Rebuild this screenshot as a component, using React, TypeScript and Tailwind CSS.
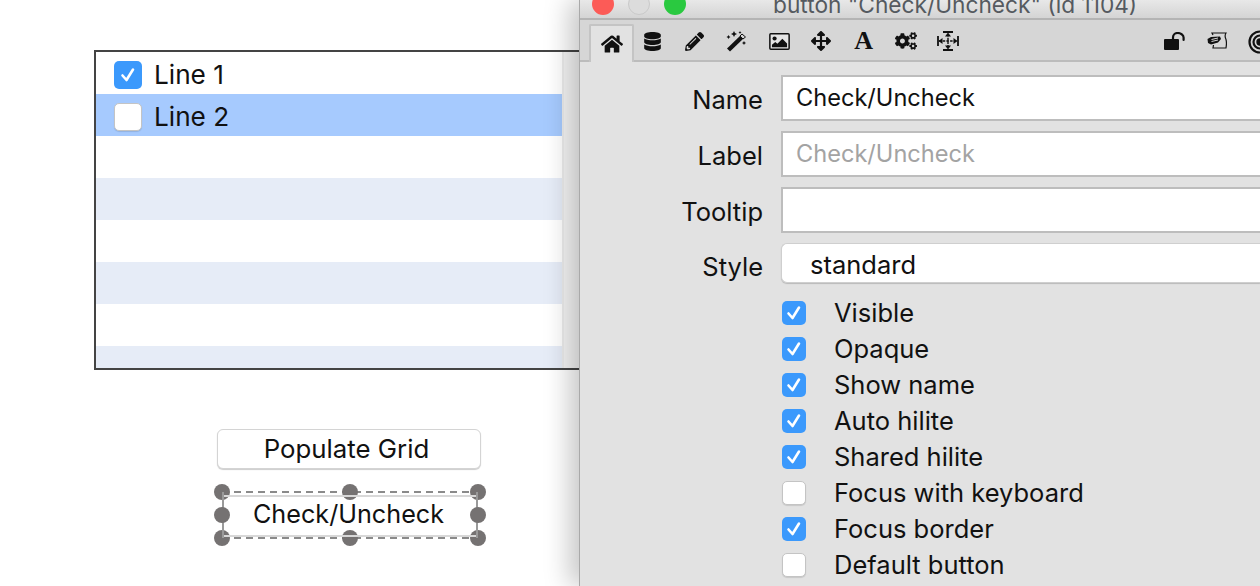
import React from "react";
import { FaHome, FaDatabase, FaPencilAlt, FaArrowsAlt, FaCogs } from "react-icons/fa";

const font = { fontFamily: "Inter, 'Liberation Sans', sans-serif" };

function Check({ on, big }: { on: boolean; big?: boolean }) {
  return (
    <span
      className={`${big ? "w-7 h-7" : "w-6 h-6"} shrink-0 rounded-[5px] flex items-center justify-center ${
        on ? "bg-[#3b99fc]" : "bg-white border border-[#c4c4c4] shadow-[0_1px_1px_rgba(0,0,0,0.12)]"
      }`}
    >
      {on && (
        <svg viewBox="0 0 24 24" className="w-6 h-6" fill="none" stroke="white" strokeWidth="2.6" strokeLinecap="round" strokeLinejoin="round">
          <path d="M6.5 12.5 L10.5 17 L17 6.5" />
        </svg>
      )}
    </span>
  );
}

function Handle() {
  return <span className="block w-4 h-4 rounded-full bg-[#757272]" />;
}

function HandleRow() {
  return (
    <div className="flex items-center justify-between h-4 relative">
      <div className="absolute left-2 right-2 top-[7px] h-[2px] bg-[repeating-linear-gradient(90deg,#8a8a8a_0_7px,transparent_7px_12px)]" />
      <span className="relative"><Handle /></span>
      <span className="relative"><Handle /></span>
      <span className="relative"><Handle /></span>
    </div>
  );
}

function Field({ label, value, placeholder, mt }: { label: string; value?: string; placeholder?: string; mt: string }) {
  return (
    <div className={`flex items-center ${mt}`}>
      <div className="w-[183px] text-right text-[25.5px] leading-none text-[#111] pt-[3px]">{label}</div>
      <div className="ml-[18px] flex-1 h-[46px] bg-white border-2 border-r-0 border-[#bdbdbd] pl-[13px] flex items-center text-[23.6px] leading-none pb-[1px]">
        {value && <span className="text-[#111]">{value}</span>}
        {placeholder && <span className="text-[#a3a3a3]">{placeholder}</span>}
      </div>
    </div>
  );
}

const checks: [string, boolean][] = [
  ["Visible", true],
  ["Opaque", true],
  ["Show name", true],
  ["Auto hilite", true],
  ["Shared hilite", true],
  ["Focus with keyboard", false],
  ["Focus border", true],
  ["Default button", false],
];

const toolIcon = "w-[42.3px] h-[38px] flex items-center justify-center text-[#111]";

function WandIcon() {
  return (
    <svg viewBox="0 0 22 22" className="w-[22px] h-[22px]" fill="#111">
      <path d="M1 18.5 L15 5 L18 8 L4 21.5 Z" />
      <path d="M14 6 L16 4 L19.5 7 L17 9 Z" fill="#d6d6d6" stroke="#111" strokeWidth="1" />
      <path d="M8 1 l1 2 2 1 -2 1 -1 2 -1 -2 -2 -1 2 -1z" />
      <path d="M2.5 5 l.7 1.3 1.3.7 -1.3.7 -.7 1.3 -.7 -1.3 -1.3 -.7 1.3 -.7z" />
      <path d="M18 11 l.7 1.3 1.3.7 -1.3.7 -.7 1.3 -.7 -1.3 -1.3 -.7 1.3 -.7z" />
      <path d="M14 1 l.5 1 1 .5 -1 .5 -.5 1 -.5 -1 -1 -.5 1 -.5z" />
    </svg>
  );
}

function ImageIcon() {
  return (
    <svg viewBox="0 0 22 18" className="w-[21px] h-[17px]">
      <rect x="0.8" y="0.8" width="20.4" height="16.4" rx="1" fill="#fff" fillOpacity="0.35" stroke="#111" strokeWidth="1.6" />
      <circle cx="5.8" cy="5.8" r="2.2" fill="#111" />
      <path d="M3 15 V12.5 L6.5 9.5 L8.8 11.5 L14 6 L19 11 V15 Z" fill="#111" />
    </svg>
  );
}

function SplitIcon() {
  return (
    <svg viewBox="0 0 22 20" className="w-[22px] h-[20px]" fill="none" stroke="#111" strokeWidth="1.4">
      <path d="M1 5 V15 M21 5 V15 M6 1 H16 M6 19 H16" strokeWidth="1.8" />
      <path d="M11 3 V17 M2 10 H20" strokeDasharray="2.5 1.2" />
      <path fill="#111" stroke="none" d="M11 1.5 L14 5.5 H8 Z M11 18.5 L8 14.5 H14 Z M1.5 10 L5.5 7 V13 Z M20.5 10 L16.5 7 V13 Z" />
    </svg>
  );
}

function UnlockIcon() {
  return (
    <svg viewBox="0 0 21 18" className="w-[21px] h-[18px]" fill="none">
      <rect x="0" y="7" width="15" height="11" rx="1" fill="#111" />
      <path d="M9 7.5 V5.5 C9 2.8 11 1 13.7 1 C16.4 1 19.6 2.8 19.6 5.5 V8" stroke="#111" strokeWidth="2.2" strokeLinecap="round" />
    </svg>
  );
}

function ScriptIcon() {
  return (
    <svg viewBox="0 0 20 17" className="w-[20px] h-[17px]" fill="none" stroke="#111" strokeWidth="1.2">
      <path d="M6 3 L5 1 H19 C17.5 3.5 18 5.5 19 7.5 C19.7 10 19.5 13 19 16 H6 L6.5 13" />
      <path fill="#111" stroke="none" d="M0.5 7 L4 5 L13 4.5 L14 7 L11 10.5 L4 12.5 L1 11 Z" />
      <path stroke="#d6d6d6" strokeWidth="1" d="M4.5 7.5 L11 6 M4.5 9.5 L11 8" />
    </svg>
  );
}

function TargetIcon() {
  return (
    <svg viewBox="0 0 24 24" className="w-[24px] h-[24px]" fill="none" stroke="#111" strokeWidth="2.2">
      <circle cx="12" cy="12" r="10.5" />
      <circle cx="12" cy="12" r="6.5" />
      <circle cx="12" cy="12" r="2.6" fill="#111" />
    </svg>
  );
}

export default function App() {
  return (
    <div className="relative w-[1260px] h-[586px] overflow-hidden bg-white" style={font}>
      {/* Grid */}
      <div className="absolute left-[94px] top-[50px] w-[520px] h-[320px] border-2 border-[#444] bg-white overflow-hidden flex flex-col">
        <div className="h-[42px] shrink-0 flex items-center pl-[18px] pt-[4px] gap-[12px] w-[466px]">
          <Check on big />
          <span className="text-[26.2px] leading-none text-[#111]">Line 1</span>
        </div>
        <div className="h-[42px] shrink-0 flex items-center pl-[18px] pt-[4px] gap-[12px] w-[466px] bg-[#a6cafe]">
          <Check on={false} big />
          <span className="text-[26.2px] leading-none text-[#111]">Line 2</span>
        </div>
        <div className="h-[42px] shrink-0 w-[466px] bg-white" />
        <div className="h-[42px] shrink-0 w-[466px] bg-[#e6ecf7]" />
        <div className="h-[42px] shrink-0 w-[466px] bg-white" />
        <div className="h-[42px] shrink-0 w-[466px] bg-[#e6ecf7]" />
        <div className="h-[42px] shrink-0 w-[466px] bg-white" />
        <div className="h-[42px] shrink-0 w-[466px] bg-[#e6ecf7]" />
        <div className="absolute left-[466px] top-0 bottom-0 w-[18px] bg-[#f6f6f6] border-l-2 border-[#ececec]" />
      </div>

      {/* Buttons */}
      <div className="absolute left-[217px] top-[429px] w-[264px] h-[40px] rounded-[6px] bg-white border border-[#d4d4d4] shadow-[0_1px_1px_rgba(0,0,0,0.2)] flex items-center justify-center pr-[5px] text-[25.8px] leading-none text-[#111]">
        Populate Grid
      </div>
      <div className="absolute left-[214px] top-[484px] w-[272px] h-[62px] flex flex-col justify-between">
        <HandleRow />
        <HandleRow />
        <div className="absolute left-[8px] right-[8px] top-[8px] bottom-[8px] border-x-2 border-[#9a9a9a]" />
        <div className="absolute left-[10px] right-[10px] top-[11px] h-[42px] border-t-2 border-b-2 border-[#d8d8d8] flex items-center justify-center pr-[3px] pb-[2px] text-[25.2px] leading-none text-[#111]">
          Check/Uncheck
        </div>
        <div className="absolute left-0 top-[23px] right-0 flex justify-between">
          <Handle />
          <Handle />
        </div>
      </div>

      {/* Inspector window */}
      <div className="absolute left-[579px] top-0 w-[681px] h-[586px] bg-[#e2e2e2] border-l border-[#a9a9a9] shadow-[-10px_0_24px_rgba(0,0,0,0.22)] flex flex-col">
        <div className="h-[20px] shrink-0 bg-gradient-to-b from-[#e8e8e8] to-[#d4d4d4] border-b-2 border-[#b4b4b4] relative overflow-hidden">
          <div className="absolute left-[12px] top-[-7px] w-[22px] h-[22px] rounded-full bg-[#fc5b57]" />
          <div className="absolute left-[48px] top-[-7px] w-[22px] h-[22px] rounded-full bg-[#dcdcdc] border border-[#c9c9c9]" />
          <div className="absolute left-[84px] top-[-7px] w-[22px] h-[22px] rounded-full bg-[#2ac940]" />
          <div className="absolute left-[193px] top-[-9px] text-[22.7px] leading-[27px] whitespace-nowrap text-[#555a60]">button "Check/Uncheck" (id 1104)</div>
        </div>
        <div className="h-[42px] shrink-0 bg-[#d6d6d6] border-b-2 border-[#bcbcbc] flex items-end pl-[9px] relative">
          <div className="w-[45px] h-[38px] -mb-[2px] bg-[#e2e2e2] border-2 border-b-0 border-[#c4c4c4] rounded-t-[2px] flex items-center justify-center text-[#111]">
            <FaHome size={22} />
          </div>
          <div className="flex items-center h-[38px] -ml-[3px]">
            <div className={toolIcon}><FaDatabase size={19} /></div>
            <div className={toolIcon}><FaPencilAlt size={19} /></div>
            <div className={toolIcon}><WandIcon /></div>
            <div className={toolIcon}><ImageIcon /></div>
            <div className={toolIcon}><FaArrowsAlt size={20} /></div>
            <div className={toolIcon}>
              <span className="text-[26px] leading-none font-bold" style={{ fontFamily: "'Liberation Serif', serif" }}>A</span>
            </div>
            <div className={toolIcon}><FaCogs size={22} /></div>
            <div className={toolIcon}><SplitIcon /></div>
          </div>
          <div className="absolute left-[584px] top-[12px]"><UnlockIcon /></div>
          <div className="absolute left-[627px] top-[12px]"><ScriptIcon /></div>
          <div className="absolute left-[668px] top-[10px] overflow-hidden w-[12px] h-[24px]"><TargetIcon /></div>
        </div>
        <div className="flex-1 flex flex-col">
          <Field label="Name" value="Check/Uncheck" mt="mt-[13px]" />
          <Field label="Label" placeholder="Check/Uncheck" mt="mt-[10px]" />
          <Field label="Tooltip" mt="mt-[10px]" />
          <div className="flex items-center mt-[10px]">
            <div className="w-[183px] text-right text-[25.5px] leading-none text-[#111] pt-[8px]">Style</div>
            <div className="ml-[18px] flex-1 h-[40px] bg-white border border-r-0 border-[#cfcfcf] rounded-l-[6px] shadow-[0_1px_1px_rgba(0,0,0,0.18)] pl-[28px] flex items-center text-[25.5px] leading-none text-[#111] pt-[4px]">
              standard
            </div>
          </div>
          <div className="mt-[18px] ml-[202px] flex flex-col gap-[12px]">
            {checks.map(([t, on]) => (
              <div key={t} className="flex items-center h-[24px] gap-[28px]">
                <Check on={on} />
                <span className="text-[25.5px] leading-none text-[#111] whitespace-nowrap">{t}</span>
              </div>
            ))}
          </div>
        </div>
      </div>
    </div>
  );
}
